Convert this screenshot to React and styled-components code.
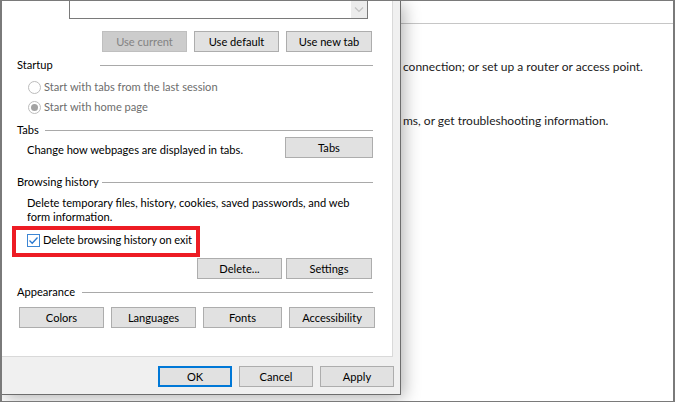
import React from 'react'
import styled, { createGlobalStyle } from 'styled-components'

const GlobalStyle = createGlobalStyle`
  body { margin: 0; background: #fff; }
  * { box-sizing: border-box; }
`

const Screen = styled.div`
  width: 675px;
  height: 402px;
  border-style: solid;
  border-color: #7a7a7a;
  border-width: 1px 2px 1px 2px;
  display: flex;
  align-items: flex-start;
  overflow: hidden;
  background: #fff;
  font-family: Lato, "Noto Sans", sans-serif;
  font-size: 11.1px;
  color: #000;
`

const Dialog = styled.div`
  flex: none;
  width: 399px;
  height: 394px;
  background: #f0f0f0;
  border-right: 1px solid #6d6d6d;
  border-bottom: 1px solid #6d6d6d;
  position: relative;
  z-index: 1;
  box-shadow: 3px 3px 16px rgba(0, 0, 0, 0.3);
  display: flex;
  flex-direction: column;
`

const Panel = styled.div`
  flex: none;
  width: 391px;
  height: 356px;
  background: #fff;
  border-right: 1px solid #d9d9d9;
  border-bottom: 1px solid #d9d9d9;
  display: flex;
  flex-direction: column;
  overflow: hidden;
`

const Combo = styled.div`
  flex: none;
  margin-left: 67px;
  width: 299px;
  height: 18px;
  border: 1px solid #7a7a7a;
  border-top: none;
  display: flex;
  justify-content: flex-end;
`

const ComboArrow = styled.div`
  width: 16px;
  height: 17px;
  background: #ececec;
  display: flex;
  align-items: center;
  justify-content: center;
`

const Row = styled.div`
  flex: none;
  display: flex;
  align-items: ${p => p.$align || 'center'};
  justify-content: ${p => p.$justify || 'flex-start'};
  gap: ${p => p.$gap || 0}px;
  margin-top: ${p => p.$top || 0}px;
  padding-left: ${p => p.$left || 0}px;
  padding-right: ${p => p.$right || 0}px;
  height: ${p => (p.$height ? `${p.$height}px` : 'auto')};
`

const Button = styled.div`
  flex: none;
  width: ${p => p.$w || 85}px;
  height: 21px;
  display: flex;
  align-items: center;
  justify-content: center;
  background: ${p => (p.$disabled ? '#cccccc' : '#e1e1e1')};
  border: ${p => (p.$primary ? '2px solid #0078d7' : `1px solid ${p.$disabled ? '#bfbfbf' : '#adadad'}`)};
  color: ${p => (p.$disabled ? '#838383' : '#000')};
  line-height: 14px;
  white-space: nowrap;
`

const Header = styled.div`
  flex: none;
  display: grid;
  grid-template-columns: ${p => p.$split}px 1fr;
  align-items: center;
  height: 14px;
  margin-top: ${p => p.$top}px;
  padding-left: 15px;
  padding-right: 19px;
  line-height: 14px;
  white-space: nowrap;
`

const HeaderLine = styled.div`
  height: 1px;
  background: #a9a9a9;
`

const Radio = styled.span`
  flex: none;
  width: 13px;
  height: 13px;
  border-radius: 50%;
  border: 1px solid #bcbcbc;
  background: #fff;
  display: flex;
  align-items: center;
  justify-content: center;
  &::after {
    content: '';
    width: 7px;
    height: 7px;
    border-radius: 50%;
    background: ${p => (p.$checked ? '#a3a3a3' : 'transparent')};
  }
`

const DisabledText = styled.span`
  color: #6d6d6d;
  line-height: 16px;
  white-space: nowrap;
`

const Text = styled.span`
  line-height: ${p => p.$lh || 16}px;
  padding-top: ${p => p.$pt || 0}px;
  letter-spacing: ${p => p.$ls || 0}px;
  white-space: nowrap;
`

const Highlight = styled.div`
  flex: none;
  margin-top: 2px;
  margin-left: 10px;
  width: 188px;
  height: 31px;
  border: 4px solid #ed1c24;
  display: flex;
  align-items: center;
  gap: 3px;
  padding: 0 0 3px 11px;
`

const Check = styled.span`
  flex: none;
  width: 13px;
  height: 13px;
  border: 1px solid #3c86d4;
  background: #fff;
  display: flex;
  align-items: center;
  justify-content: center;
`

const Footer = styled.div`
  flex: 1;
  display: flex;
  justify-content: flex-end;
  align-items: flex-start;
  gap: 7px;
  padding: 9px 6px 0 0;
`

const Pane = styled.div`
  flex: 1;
  height: 100%;
  display: flex;
  flex-direction: column;
  color: #1a1a1a;
  font-size: 12px;
`

const PaneTop = styled.div`
  flex: none;
  height: 23px;
  border-bottom: 1px solid #c6c6c6;
`

const PaneText = styled.div`
  margin-top: ${p => p.$top}px;
  padding-left: 2px;
  line-height: 16px;
  white-space: nowrap;
`

export default function App() {
  return (
    <>
      <GlobalStyle />
      <Screen>
        <Dialog>
          <Panel>
            <Combo>
              <ComboArrow>
                <svg width="10" height="6" viewBox="0 0 10 6">
                  <path d="M1 0.5 L5 4.5 L9 0.5" fill="none" stroke="#c2c2c2" strokeWidth="1.2" />
                </svg>
              </ComboArrow>
            </Combo>
            <Row $top={12} $left={100} $gap={7}>
              <Button $disabled $w={85}>Use current</Button>
              <Button $w={85}>Use default</Button>
              <Button $w={86}>Use new tab</Button>
            </Row>

            <Header $top={6} $split={83}>
              <span>Startup</span>
              <HeaderLine />
            </Header>
            <Row $top={7} $left={26} $gap={3} $height={16}>
              <Radio />
              <DisabledText>Start with tabs from the last session</DisabledText>
            </Row>
            <Row $top={4} $left={26} $gap={3} $height={16}>
              <Radio $checked />
              <DisabledText>Start with home page</DisabledText>
            </Row>

            <Header $top={8} $split={28}>
              <span>Tabs</span>
              <HeaderLine />
            </Header>
            <Row $top={0} $left={25} $right={19} $justify="space-between" $align="flex-start">
              <Text $pt={5}>Change how webpages are displayed in tabs.</Text>
              <Button $w={88}>Tabs</Button>
            </Row>

            <Header $top={17} $split={85}>
              <span>Browsing history</span>
              <HeaderLine />
            </Header>
            <Row $top={7} $left={25}>
              <Text $lh={14}>
                Delete temporary files, history, cookies, saved passwords, and web
                <br />
                form information.
              </Text>
            </Row>
            <Highlight>
              <Check>
                <svg width="11" height="11" viewBox="0 0 11 11">
                  <path d="M1.5 5.5 L4.2 8.2 L9.5 2.5" fill="none" stroke="#2a78cf" strokeWidth="1.3" />
                </svg>
              </Check>
              <Text $ls={-0.1}>Delete browsing history on exit</Text>
            </Highlight>
            <Row $top={1} $right={20} $justify="flex-end" $gap={4}>
              <Button $w={85}>Delete...</Button>
              <Button $w={86}>Settings</Button>
            </Row>

            <Header $top={6} $split={65}>
              <span>Appearance</span>
              <HeaderLine />
            </Header>
            <Row $top={8} $left={17} $gap={7}>
              <Button $w={85}>Colors</Button>
              <Button $w={85}>Languages</Button>
              <Button $w={79}>Fonts</Button>
              <Button $w={86}>Accessibility</Button>
            </Row>
          </Panel>
          <Footer>
            <Button $primary $w={74}>OK</Button>
            <Button $w={74}>Cancel</Button>
            <Button $w={74}>Apply</Button>
          </Footer>
        </Dialog>
        <Pane>
          <PaneTop />
          <PaneText $top={35}>connection; or set up a router or access point.</PaneText>
          <PaneText $top={38}>ms, or get troubleshooting information.</PaneText>
        </Pane>
      </Screen>
    </>
  )
}
